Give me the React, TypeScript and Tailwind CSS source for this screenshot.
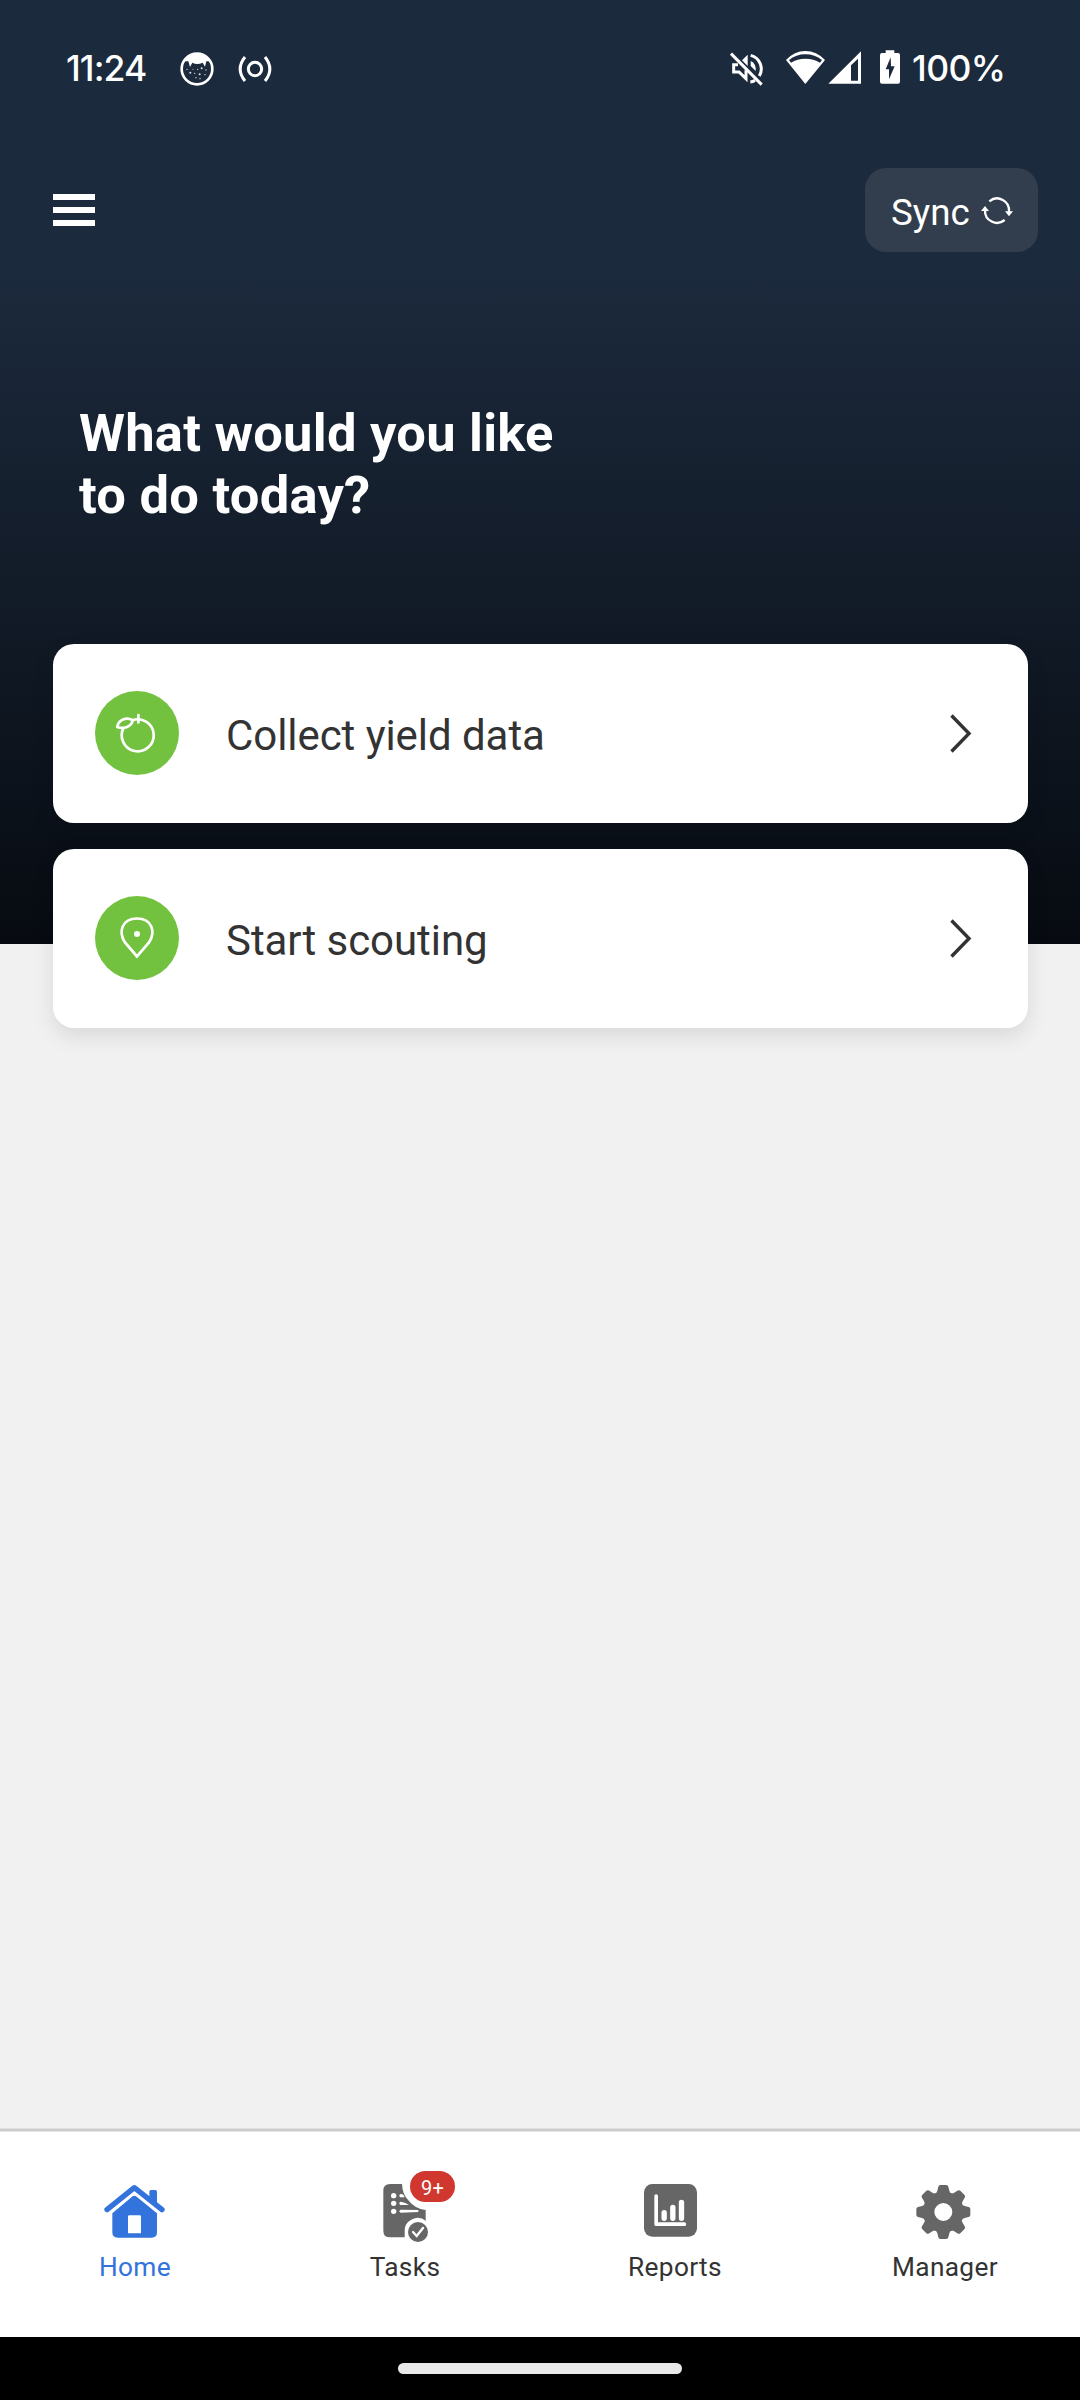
import type { ReactNode } from "react";

function OctocatIcon() {
  return (
    <svg className="ml-[30px] h-10 w-10 shrink-0" viewBox="410 57 120 120">
      <circle cx="470" cy="117" r="46" fill="none" stroke="#fff" strokeWidth="8" />
      <path
        d="M430 94 Q445 70 470 70 Q495 70 510 94 L498 94 L494 110 L487 98 Q470 106 456 98 L449 111 L444 94 Z"
        fill="#fff"
      />
      <g fill="#dfe3e8">
        <circle cx="450" cy="128" r="3" />
        <circle cx="472" cy="118" r="2" />
        <circle cx="484" cy="115" r="3" />
        <circle cx="478" cy="133" r="3" />
        <circle cx="497" cy="120" r="2" />
        <circle cx="463" cy="130" r="2" />
        <circle cx="494" cy="134" r="2" />
        <circle cx="467" cy="143" r="2" />
        <circle cx="479" cy="146" r="2" />
        <circle cx="440" cy="118" r="2" />
        <circle cx="458" cy="118" r="1.5" />
      </g>
    </svg>
  );
}

function BroadcastIcon() {
  return (
    <svg className="ml-[18px] h-10 w-10 shrink-0" viewBox="585 57 120 120" fill="none" stroke="#fff" strokeWidth="9">
      <circle cx="645" cy="117" r="20" />
      <path d="M615 81 Q586 117 615 153 M675 81 Q704 117 675 153" />
    </svg>
  );
}

function MuteIcon() {
  return (
    <svg className="h-10 w-10 shrink-0" viewBox="81 57 120 120" fill="none" stroke="#fff" strokeWidth="9">
      <path d="M93 71 L185 164" strokeWidth="9" />
      <path d="M114 104 H101 V126 H117 L138 146 V121" />
      <path d="M126 91 L143 74 V108 Z" fill="#fff" stroke="none" />
      <path d="M152 76 A42 42 0 0 1 178 138" />
      <path d="M152 93 Q169 101 167 123 L152 108 Z" fill="#fff" stroke="none" />
      <path d="M151 156 Q158 155 165 151" />
    </svg>
  );
}

function WifiIcon() {
  return (
    <svg className="ml-[18px] h-10 w-[42px] shrink-0" viewBox="255 57 126 120" fill="#fff">
      <path
        fillRule="evenodd"
        d="M316 162 L258 90 Q283 63 316 63 Q350 63 375 90 Z M273 98 Q292 86 316 86 Q341 86 360 98 L366 90 Q345 73 316 73 Q288 73 267 90 Z"
      />
    </svg>
  );
}

function SignalIcon() {
  return (
    <svg className="h-10 w-9 shrink-0" viewBox="381 57 108 120" fill="#fff">
      <path fillRule="evenodd" d="M385 161 L483 64 V161 Z M453 106 V152 H474 V86 Z" />
    </svg>
  );
}

function BatteryIcon() {
  return (
    <svg className="ml-3.5 h-10 w-[26px] shrink-0" viewBox="531 57 78 120">
      <path d="M557 61 H583 V69 H594 Q600 69 600 75 V155 Q600 161 594 161 H546 Q540 161 540 155 V75 Q540 69 546 69 H557 Z" fill="#fff" />
      <path d="M572 82 L557 118 H567 V148 L584 109 H573 Z" fill="#1c2a3d" />
    </svg>
  );
}

function SyncIcon() {
  return (
    <svg className="h-9 w-9 shrink-0" viewBox="417 126 108 108" fill="none" stroke="#fff" strokeWidth="7">
      <path d="M448 154 A36 36 0 0 1 507 186" />
      <path d="M494 210 A36 36 0 0 1 435 181" />
      <path d="M495 184 H519 L507 199 Z M423 183 H447 L435 168 Z" fill="#fff" stroke="none" />
    </svg>
  );
}

function FruitIcon() {
  return (
    <svg className="h-[84px] w-[84px]" viewBox="95 691 84 84" fill="none" stroke="#fff" strokeWidth="2.7" strokeLinecap="round">
      <path d="M132.5 720.2 A16 16 0 1 1 123.4 728.2" />
      <path d="M138.4 715 V722.5" />
      <path d="M117.2 727 C118.5 719.5 126 716.6 132.8 720.2 C131.5 726.5 124 729.5 117.2 727 Z" strokeLinejoin="round" />
    </svg>
  );
}

function PinIcon() {
  return (
    <svg className="h-[84px] w-[84px]" viewBox="95 896 84 84" fill="none" stroke="#fff" strokeWidth="2.7">
      <path d="M137 956.5 L125 942.5 C118 932 122 918.5 137 918.5 C152 918.5 156 932 149 942.5 Z" />
      <circle cx="137" cy="934" r="3" fill="#fff" stroke="none" />
    </svg>
  );
}

function ActionCard({ icon, label }: { icon: ReactNode; label: string }) {
  return (
    <button className="flex h-[179px] w-full items-center rounded-[21px] bg-white pr-12 pb-px pl-[42px] shadow-[0_8px_22px_rgba(0,0,0,0.1)]">
      <span className="size-[84px] shrink-0 rounded-full bg-[#73c23f]">{icon}</span>
      <span className="ml-[47px] flex-1 pt-[5px] text-left text-[42px] leading-[50px] tracking-[-0.06px] whitespace-nowrap text-[#333]">
        {label}
      </span>
      <svg className="h-10 w-10" viewBox="940 713 40 40" fill="none" stroke="#333" strokeWidth="3.4">
        <path d="M951.5 715.500 L969 733.500 L951.5 751.500" />
      </svg>
    </button>
  );
}

function HomeIcon() {
  return (
    <svg className="size-20" viewBox="105 180 240 240" fill="#3273dc">
      <path d="M141 299 L223 233 L306 299" fill="none" stroke="#3273dc" strokeWidth="16" strokeLinecap="round" strokeLinejoin="round" />
      <path d="M268 270 V245 Q268 240 273 240 H286 Q291 240 291 245 V288 Z" />
      <path
        fillRule="evenodd"
        d="M157 310 L218 259 Q223 255 228 259 L291 310 V367 Q291 383 275 383 H173 Q157 383 157 367 Z M208 316 Q204 316 204 320 V370 H243 V320 Q243 316 239 316 Z"
      />
    </svg>
  );
}

function TasksIcon() {
  return (
    <svg className="size-20" viewBox="915 180 240 240">
      <path d="M990 222 H1026 Q1027 252 1045 271 Q1065 297 1097 300 V382 H990 Q970 382 970 362 V242 Q970 222 990 222 Z" fill="#666" />
      <g fill="#fff">
        <circle cx="1001" cy="257" r="8" />
        <circle cx="1001" cy="280" r="8" />
        <circle cx="1001" cy="304" r="8" />
        <path d="M1022 252 Q1030 250 1034 262 H1021 Q1014 257 1022 252 Z" />
        <path d="M1021 275 Q1035 276 1047 285 H1021 Q1015 280 1021 275 Z" />
        <path d="M1022 299 L1075 300 V306 L1022 308 Q1014 303 1022 299 Z" />
        <path d="M1034 385 V366 A39 39 0 0 1 1098 333 V385 Z" />
      </g>
      <circle cx="1074" cy="366" r="30" fill="#666" />
      <path d="M1059 366 L1070 378 L1089 354" fill="none" stroke="#fff" strokeWidth="7" strokeLinecap="round" />
    </svg>
  );
}

function ReportsIcon() {
  return (
    <svg className="size-20" viewBox="105 180 240 240" fill="none" stroke="#fff" strokeLinecap="round">
      <rect x="132" y="222" width="159" height="158" rx="25" fill="#666" stroke="none" />
      <path d="M168.500 258 V342.500 H253" strokeWidth="11" strokeLinejoin="round" />
      <path d="M192.500 308 V325 M218.500 292 V325 M244.500 277 V325" strokeWidth="16" />
    </svg>
  );
}

const TOOTH_ANGLES = [0, 45, 90, 135, 180, 225, 270, 315];

function GearIcon() {
  return (
    <svg className="size-20" viewBox="915 180 240 240" fill="#666">
      <circle cx="1030" cy="306" r="43" fill="none" stroke="#666" strokeWidth="32" />
      {TOOTH_ANGLES.map((angle) => (
        <path
          key={angle}
          transform={`rotate(${angle} 1030 306)`}
          d="M1002 252 Q1011 250 1012 242 L1015 230 Q1016 225 1021 225 H1039 Q1044 225 1045 230 L1048 242 Q1049 250 1058 252 L1048 262 H1012 Z"
        />
      ))}
    </svg>
  );
}

function NavItem({ icon, label, active, badge }: { icon: ReactNode; label: string; active?: boolean; badge?: string }) {
  return (
    <a className="flex flex-1 flex-col items-center pt-[38px]">
      <span className="relative">
        {icon}
        {badge && (
          <span className="absolute top-px left-[45px] flex h-[31px] w-[45px] items-center justify-center rounded-full bg-[#d0382f] text-[20px] leading-none tracking-[0.2px] text-white">
            <span className="pt-0.5">{badge}</span>
          </span>
        )}
      </span>
      <span
        className={
          active
            ? "mt-px text-[26.25px] leading-8 tracking-[0.35px] text-[#3273dc]"
            : "mt-px text-[26.25px] leading-8 tracking-[0.35px] text-[#333]"
        }
      >
        {label}
      </span>
    </a>
  );
}

export default function App() {
  return (
    <div className="flex h-[2400px] w-[1080px] flex-col overflow-hidden bg-[#f1f1f1] font-['Roboto',sans-serif]">
      <header className="h-[944px] shrink-0 bg-[linear-gradient(180deg,#1c2a3d_0px,#1c2a3d_270px,#070b11_944px)] text-white">
        <div className="flex h-[138px] items-center pr-[76px] pl-[66px] font-['Inter',sans-serif] text-[35.5px] leading-[44px] font-medium">
          <span className="w-[81px] tracking-[-0.9px] whitespace-nowrap">11:24</span>
          <OctocatIcon />
          <BroadcastIcon />
          <span className="flex-1" />
          <MuteIcon />
          <WifiIcon />
          <SignalIcon />
          <BatteryIcon />
          <span className="ml-[9px] w-[92px] tracking-[-0.6px] whitespace-nowrap">100%</span>
        </div>

        <div className="mt-[30px] flex h-[84px] items-center justify-between pr-[42px] pl-[53px]">
          <button className="flex w-[42px] flex-col gap-[7px] pb-px" aria-label="Menu">
            <span className="h-1.5 bg-white" />
            <span className="h-1.5 bg-white" />
            <span className="h-1.5 bg-white" />
          </button>
          <button className="flex h-[84px] w-[173px] items-center rounded-[21px] bg-[#323e4e] pl-[26px]">
            <span className="w-[88px] pt-[5px] text-left text-[36.75px] leading-[44px]">Sync</span>
            <SyncIcon />
          </button>
        </div>

        <h1 className="mt-[150px] ml-[79px] text-[52.5px] leading-[62px] font-bold tracking-[0.24px]">
          What would you like
          <br />
          to do today?
        </h1>

        <div className="mt-[118px] flex flex-col gap-[26px] pr-[52px] pl-[53px]">
          <ActionCard icon={<FruitIcon />} label="Collect yield data" />
          <ActionCard icon={<PinIcon />} label="Start scouting" />
        </div>
      </header>

      <main className="flex-1" />

      <div className="h-1 shrink-0 bg-[linear-gradient(180deg,#dfdfdf_0_1px,#cdcdcd_1px_3px,#e4e4e4_3px_4px)]" />
      <nav className="flex h-[205px] shrink-0 bg-white">
        <NavItem icon={<HomeIcon />} label="Home" active />
        <NavItem icon={<TasksIcon />} label="Tasks" badge="9+" />
        <NavItem icon={<ReportsIcon />} label="Reports" />
        <NavItem icon={<GearIcon />} label="Manager" />
      </nav>
      <div className="flex h-[63px] shrink-0 items-center justify-center bg-black">
        <div className="h-[11px] w-[284px] rounded-full bg-[#e9e9e9]" />
      </div>
    </div>
  );
}
